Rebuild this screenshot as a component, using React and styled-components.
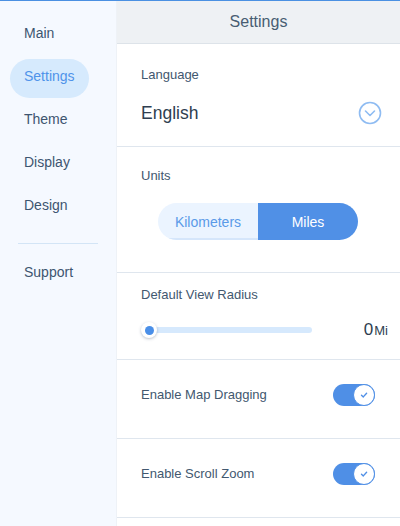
import React from "react";
import styled, { createGlobalStyle } from "styled-components";

const Global = createGlobalStyle`
  html, body { margin: 0; padding: 0; background: #ffffff; }
  body { font-family: "Liberation Sans", Arial, sans-serif; }
  * { box-sizing: border-box; }
`;

const Shell = styled.div`
  display: flex;
  height: 526px;
  border-top: 1px solid #4a90e2;
  overflow: hidden;
`;

const Sidebar = styled.nav`
  width: 116px;
  flex: none;
  background: #f5f9ff;
  padding: 15px 0 0 10px;
  display: flex;
  flex-direction: column;
`;

const NavItem = styled.div`
  width: 79px;
  height: 39px;
  margin-bottom: 4px;
  padding: 0 0 6px 14px;
  display: flex;
  align-items: center;
  border-radius: 20px;
  font-size: 14px;
  color: ${(p) => (p.$active ? "#4f93ea" : "#3d5570")};
  background: ${(p) => (p.$active ? "#d6eafd" : "transparent")};
`;

const NavDivider = styled.div`
  width: 80px;
  height: 1px;
  margin: 12px 0 11px 8px;
  background: #d3e5f6;
`;

const Main = styled.main`
  flex: 1;
  display: flex;
  flex-direction: column;
  border-left: 1px solid #eef2f7;
`;

const Header = styled.header`
  height: 43px;
  background: #eef1f4;
  border-bottom: 1px solid #dde3e9;
  display: flex;
  align-items: center;
  justify-content: center;
  font-size: 16px;
  color: #485d72;
`;

const Section = styled.section`
  padding: ${(p) => p.$pad};
  border-bottom: 1px solid #dfe6ee;
  display: flex;
  flex-direction: column;
`;

const Label = styled.div`
  font-size: 13px;
  line-height: 16px;
  color: #42586f;
`;

const SelectRow = styled.div`
  margin-top: 18px;
  height: 24px;
  display: flex;
  align-items: center;
  justify-content: space-between;
  padding-right: 18px;
`;

const SelectValue = styled.div`
  font-size: 17.5px;
  color: #2e3e50;
`;

const Segmented = styled.div`
  margin: 19px 0 0 17px;
  display: flex;
  width: 200px;
  height: 37px;
  border-radius: 19px;
  overflow: hidden;
`;

const Segment = styled.div`
  flex: 1;
  display: flex;
  align-items: center;
  justify-content: center;
  font-size: 14px;
  color: ${(p) => (p.$active ? "#ffffff" : "#5a9ae8")};
  background: ${(p) => (p.$active ? "#5090e6" : "#ebf4ff")};
  box-shadow: ${(p) => (p.$active ? "none" : "inset 0 -2px 0 #d5e6fb")};
`;

const SliderRow = styled.div`
  margin-top: 17px;
  height: 20px;
  display: flex;
  align-items: center;
  padding-right: 12px;
`;

const Track = styled.div`
  position: relative;
  margin-left: 8px;
  width: 163px;
  height: 6px;
  border-radius: 3px;
  background: #d6e9fd;
`;

const Thumb = styled.div`
  position: absolute;
  left: -8px;
  top: -5px;
  width: 16px;
  height: 16px;
  border-radius: 50%;
  background: #ffffff;
  box-shadow: 0 1px 3px rgba(60, 80, 110, 0.35);
  display: flex;
  align-items: center;
  justify-content: center;
  &::after {
    content: "";
    width: 9px;
    height: 9px;
    border-radius: 50%;
    background: #4a8fe8;
  }
`;

const Value = styled.div`
  margin-left: auto;
  display: flex;
  align-items: baseline;
  color: #2e3e50;
`;

const Num = styled.span`
  font-size: 17px;
`;

const Unit = styled.span`
  font-size: 13px;
  margin-left: 1px;
`;

const ToggleRow = styled.div`
  height: 22px;
  display: flex;
  align-items: center;
  justify-content: space-between;
  padding-right: 25px;
`;

const Toggle = styled.div`
  width: 42px;
  height: 22px;
  border-radius: 11px;
  background: #4f8fe6;
  display: flex;
  justify-content: flex-end;
  align-items: center;
`;

const Knob = styled.div`
  width: 22px;
  height: 22px;
  border-radius: 50%;
  background: #ffffff;
  border: 1px solid #4f8fe6;
  display: flex;
  align-items: center;
  justify-content: center;
`;

const Chevron = () => (
  <svg width="24" height="24" viewBox="0 0 24 24" fill="none">
    <circle cx="12" cy="12" r="10.5" stroke="#8fbcf2" strokeWidth="1.6" />
    <path d="M7.5 10l4.5 4.5 4.5-4.5" stroke="#8fbcf2" strokeWidth="1.6" strokeLinecap="round" strokeLinejoin="round" />
  </svg>
);

const Check = () => (
  <svg width="10" height="10" viewBox="0 0 10 10" fill="none">
    <path d="M2.5 5.2l1.8 1.7 3.3-3.6" stroke="#4f8fe6" strokeWidth="1.4" strokeLinecap="round" strokeLinejoin="round" />
  </svg>
);

const Switch = () => (
  <Toggle>
    <Knob>
      <Check />
    </Knob>
  </Toggle>
);

export default function App() {
  const nav = ["Main", "Settings", "Theme", "Display", "Design"];
  return (
    <>
      <Global />
      <Shell>
        <Sidebar>
          {nav.map((n) => (
            <NavItem key={n} $active={n === "Settings"}>
              {n}
            </NavItem>
          ))}
          <NavDivider />
          <NavItem>Support</NavItem>
        </Sidebar>
        <Main>
          <Header>Settings</Header>
          <Section $pad="23px 0 21px 24px">
            <Label>Language</Label>
            <SelectRow>
              <SelectValue>English</SelectValue>
              <Chevron />
            </SelectRow>
          </Section>
          <Section $pad="21px 0 32px 24px">
            <Label>Units</Label>
            <Segmented>
              <Segment>Kilometers</Segment>
              <Segment $active>Miles</Segment>
            </Segmented>
          </Section>
          <Section $pad="14px 0 19px 24px">
            <Label>Default View Radius</Label>
            <SliderRow>
              <Track>
                <Thumb />
              </Track>
              <Value>
                <Num>0</Num>
                <Unit>Mi</Unit>
              </Value>
            </SliderRow>
          </Section>
          <Section $pad="24px 0 32px 24px">
            <ToggleRow>
              <Label>Enable Map Dragging</Label>
              <Switch />
            </ToggleRow>
          </Section>
          <Section $pad="24px 0 32px 24px">
            <ToggleRow>
              <Label>Enable Scroll Zoom</Label>
              <Switch />
            </ToggleRow>
          </Section>
        </Main>
      </Shell>
    </>
  );
}
